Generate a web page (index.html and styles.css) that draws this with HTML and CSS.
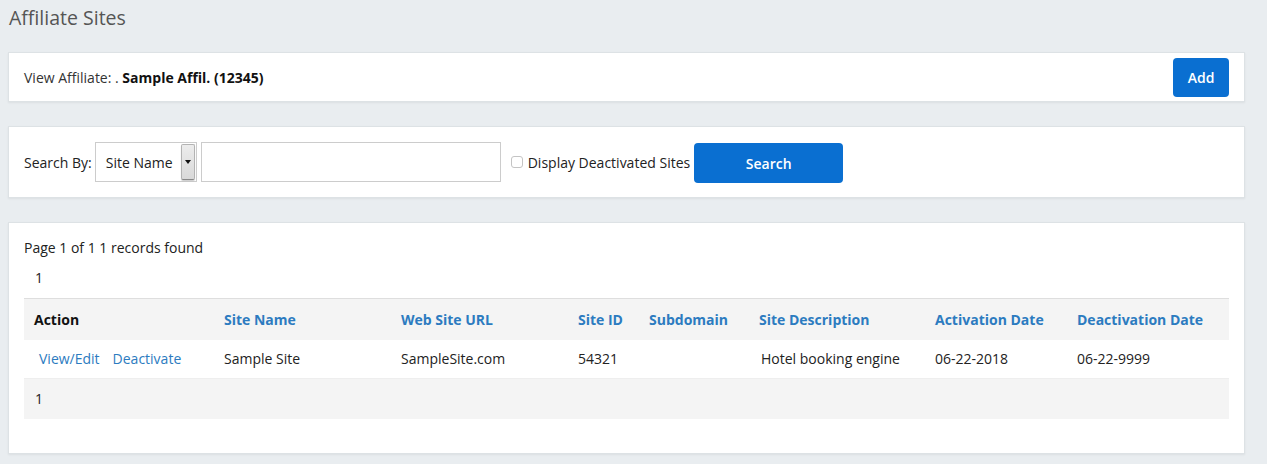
FILE: index.html
```html
<!DOCTYPE html>
<html>
<head>
<meta charset="utf-8">
<link rel="stylesheet" href="styles.css">
</head>
<body>
<div class="page">
  <h1 class="title">Affiliate Sites</h1>

  <div class="panel panel-affiliate">
    <div class="affiliate-text">View Affiliate: . <b>Sample Affil. (12345)</b></div>
    <button class="btn btn-add">Add</button>
  </div>

  <div class="panel panel-search">
    <span class="label">Search By:</span>
    <div class="select">
      <span class="select-value">Site Name</span>
      <span class="select-arrow"><svg width="6" height="4" viewBox="0 0 6 4"><path d="M0 0H6L3 4Z" fill="#111"/></svg></span>
    </div>
    <input class="text-input" type="text">
    <label class="check"><span class="checkbox"></span>Display Deactivated Sites</label>
    <button class="btn btn-search">Search</button>
  </div>

  <div class="panel panel-results">
    <div class="summary">Page 1 of 1 1 records found</div>
    <div class="pager">1</div>
    <table class="grid">
      <colgroup>
        <col class="c1"><col class="c2"><col class="c3"><col class="c4"><col class="c5"><col class="c6"><col class="c7"><col class="c8">
      </colgroup>
      <thead>
        <tr>
          <th class="plain">Action</th>
          <th>Site Name</th>
          <th>Web Site URL</th>
          <th>Site ID</th>
          <th>Subdomain</th>
          <th>Site Description</th>
          <th>Activation Date</th>
          <th>Deactivation Date</th>
        </tr>
      </thead>
      <tbody>
        <tr class="data">
          <td class="actions"><a href="#">View/Edit</a><a href="#">Deactivate</a></td>
          <td>Sample Site</td>
          <td>SampleSite.com</td>
          <td>54321</td>
          <td></td>
          <td class="desc">Hotel booking engine</td>
          <td>06-22-2018</td>
          <td>06-22-9999</td>
        </tr>
        <tr class="foot">
          <td colspan="8"><span class="foot-num">1</span></td>
        </tr>
      </tbody>
    </table>
  </div>
</div>
</body>
</html>
```

FILE: styles.css
```css
* { box-sizing: border-box; }

html, body {
  margin: 0;
  padding: 0;
  background: #e9edf0;
}

body {
  font-family: "Open Sans", "Liberation Sans", Arial, sans-serif;
  font-size: 14px;
  line-height: 19px;
  color: #333;
}

.page {
  padding: 0 22px 10px 8px;
}

.title {
  margin: 0;
  padding: 4px 0 0 1px;
  height: 52px;
  font-size: 19.5px;
  font-weight: 400;
  color: #555;
  line-height: 28px;
}

.panel {
  background: #fff;
  border: 1px solid #dde2e5;
  box-shadow: 0 1px 2px rgba(0, 0, 0, 0.06);
}

.panel-affiliate {
  height: 50px;
  display: flex;
  align-items: center;
  justify-content: space-between;
  padding: 0 15px 0 15px;
  margin-bottom: 24px;
}

.affiliate-text {
  color: #333;
}

.affiliate-text b {
  color: #111;
  font-weight: 700;
}

.btn {
  border: none;
  border-radius: 4px;
  background: #0a6fd1;
  color: #fff;
  font-family: inherit;
  font-weight: 600;
  cursor: pointer;
}

.btn-add {
  width: 56px;
  height: 39px;
  font-size: 14px;
  margin-top: 1px;
}

.panel-search {
  height: 72px;
  display: flex;
  align-items: center;
  padding: 0 15px;
  margin-bottom: 24px;
}

.label {
  margin-right: 3px;
  color: #222;
}

.select {
  width: 102px;
  height: 40px;
  border: 1px solid #ccc;
  display: flex;
  align-items: center;
  justify-content: space-between;
  padding: 0 1px 0 10px;
  background: #fff;
  color: #222;
}

.select-arrow {
  width: 14px;
  height: 36px;
  background: linear-gradient(#ececec, #d9d9d9);
  border: 1px solid #b3b3b3;
  border-bottom-color: #888;
  border-radius: 2px;
  display: flex;
  align-items: center;
  justify-content: center;
  box-shadow: 0 1px 1px rgba(0,0,0,0.2);
}

.text-input {
  width: 300px;
  height: 40px;
  border: 1px solid #ccc;
  margin-left: 4px;
  padding: 0 8px;
  font-family: inherit;
  outline: none;
}

.check {
  display: flex;
  align-items: center;
  margin-left: 10px;
  color: #222;
}

.checkbox {
  width: 12px;
  height: 12px;
  border: 1px solid #c4c4c4;
  border-radius: 3px;
  background: #fff;
  margin-right: 5px;
  margin-top: -1px;
}

.btn-search {
  width: 149px;
  height: 40px;
  font-size: 14px;
  margin-left: 4px;
  margin-top: 2px;
}

.panel-results {
  height: 232px;
  padding: 15px 15px 0 15px;
}

.summary {
  color: #222;
}

.pager {
  margin-top: 11px;
  padding-left: 11px;
  color: #222;
}

.grid {
  margin-top: 11px;
  width: 100%;
  border-collapse: collapse;
  table-layout: fixed;
}

.c1 { width: 190px; }
.c2 { width: 177px; }
.c3 { width: 177px; }
.c4 { width: 71px; }
.c5 { width: 110px; }
.c6 { width: 176px; }
.c7 { width: 142px; }
.c8 { width: auto; }

.grid thead tr {
  background: #f4f4f4;
  border-top: 1px solid #dedede;
}

.grid th {
  height: 41px;
  text-align: left;
  padding: 0 10px;
  font-weight: 700;
  color: #2c7bc0;
  white-space: nowrap;
}

.grid th.plain {
  color: #111;
}

.grid td {
  padding: 0 10px;
  height: 39px;
  color: #222;
  white-space: nowrap;
}

.grid tr.data td {
  border-bottom: 1px solid #eee;
}

.actions a {
  color: #2c7bc0;
  text-decoration: none;
  margin-left: 5px;
  margin-right: 13px;
}

.actions a + a {
  margin-left: 0;
}

.desc {
  padding-left: 12px !important;
}

.foot {
  background: #f4f4f4;
}

.foot td {
  height: 40px;
}

.foot-num {
  padding-left: 1px;
}
```
